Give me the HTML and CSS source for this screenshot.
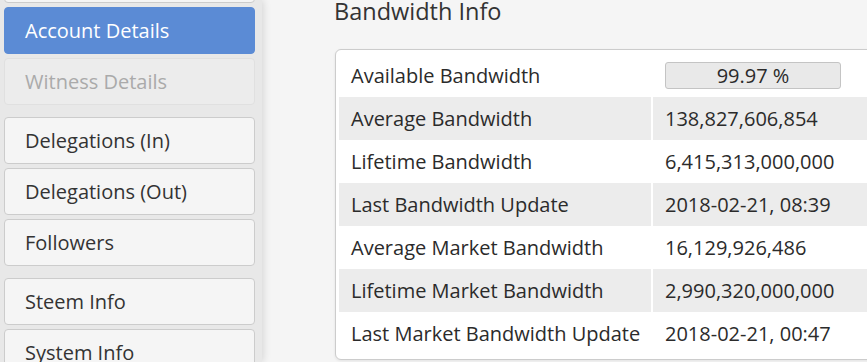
FILE: index.html
```html
<!DOCTYPE html>
<html lang="en">
<head>
    <meta charset="UTF-8">
    <title>Bandwidth Info</title>
    <link rel="stylesheet" href="styles.css">
</head>
<body>
    <div id="layout">
        <div id="sidebar">
            <div class="nav-group">
                <div class="nav-btn"></div>
                <div class="nav-btn active">Account Details</div>
                <div class="nav-btn disabled">Witness Details</div>
            </div>
            <div class="nav-group">
                <div class="nav-btn">Delegations (In)</div>
                <div class="nav-btn">Delegations (Out)</div>
                <div class="nav-btn">Followers</div>
            </div>
            <div class="nav-group">
                <div class="nav-btn">Steem Info</div>
                <div class="nav-btn">System Info</div>
            </div>
        </div>
        <div id="main">
            <h2 class="section-title">Bandwidth Info</h2>
            <div class="panel">
                <table class="info-table">
                    <tr>
                        <td>Available Bandwidth</td>
                        <td><div class="bar">99.97 %</div></td>
                    </tr>
                    <tr><td>Average Bandwidth</td><td>138,827,606,854</td></tr>
                    <tr><td>Lifetime Bandwidth</td><td>6,415,313,000,000</td></tr>
                    <tr><td>Last Bandwidth Update</td><td>2018-02-21, 08:39</td></tr>
                    <tr><td>Average Market Bandwidth</td><td>16,129,926,486</td></tr>
                    <tr><td>Lifetime Market Bandwidth</td><td>2,990,320,000,000</td></tr>
                    <tr><td>Last Market Bandwidth Update</td><td>2018-02-21, 00:47</td></tr>
                </table>
            </div>
        </div>
    </div>
</body>
</html>
```

FILE: styles.css
```css
body {
    margin: 0;
    background: #f5f5f5;
    color: #2b2b2b;
    font-family: 'Open Sans', sans-serif;
    overflow: hidden;
}
#layout {
    display: flex;
    height: 362px;
}
#sidebar {
    width: 251px;
    flex-shrink: 0;
    padding: 0 7px 0 4px;
    background: #e8e8e8;
    box-shadow: 1px 0 8px rgba(0,0,0,0.14);
    overflow: hidden;
    z-index: 1;
}
.nav-group {
    display: flex;
    flex-direction: column;
    gap: 4px;
    margin-bottom: 12px;
}
.nav-group:first-child {
    margin-top: -44px;
}
.nav-btn {
    height: 45px;
    line-height: 45px;
    padding-left: 20px;
    font-size: 20px;
    background: #f5f5f5;
    border: 1px solid #ccc;
    border-radius: 4px;
    color: #333;
}
.nav-btn.active {
    background: #5b8bd5;
    border-color: #5b8bd5;
    color: #fff;
}
.nav-btn.disabled {
    background: #ececec;
    border-color: #e0e0e0;
    color: #aaa;
}
#main {
    flex: 1;
    padding-left: 72px;
    overflow: hidden;
}
.section-title {
    margin: 0;
    font-size: 23.5px;
    font-weight: normal;
    line-height: 22px;
    color: #333;
}
.panel {
    margin-top: 27px;
    margin-left: 1px;
    width: 600px;
    padding: 4px 3px;
    background: #fff;
    border: 1px solid #ccc;
    border-radius: 6px;
    box-shadow: 0 1px 3px rgba(0,0,0,0.08);
}
.info-table {
    width: 100%;
    table-layout: fixed;
    border-collapse: collapse;
    font-size: 20px;
    white-space: nowrap;
}
.info-table td {
    height: 43px;
    padding: 0 12px;
}
.info-table td:first-child {
    width: 288px;
    border-right: 2px solid #fff;
}
.info-table tr:nth-child(even) td {
    background: #ececec;
}
.bar {
    width: 174px;
    height: 25px;
    line-height: 25px;
    text-align: center;
    background: #e9e9e9;
    border: 1px solid #c4c4c4;
    border-radius: 3px;
}
```
